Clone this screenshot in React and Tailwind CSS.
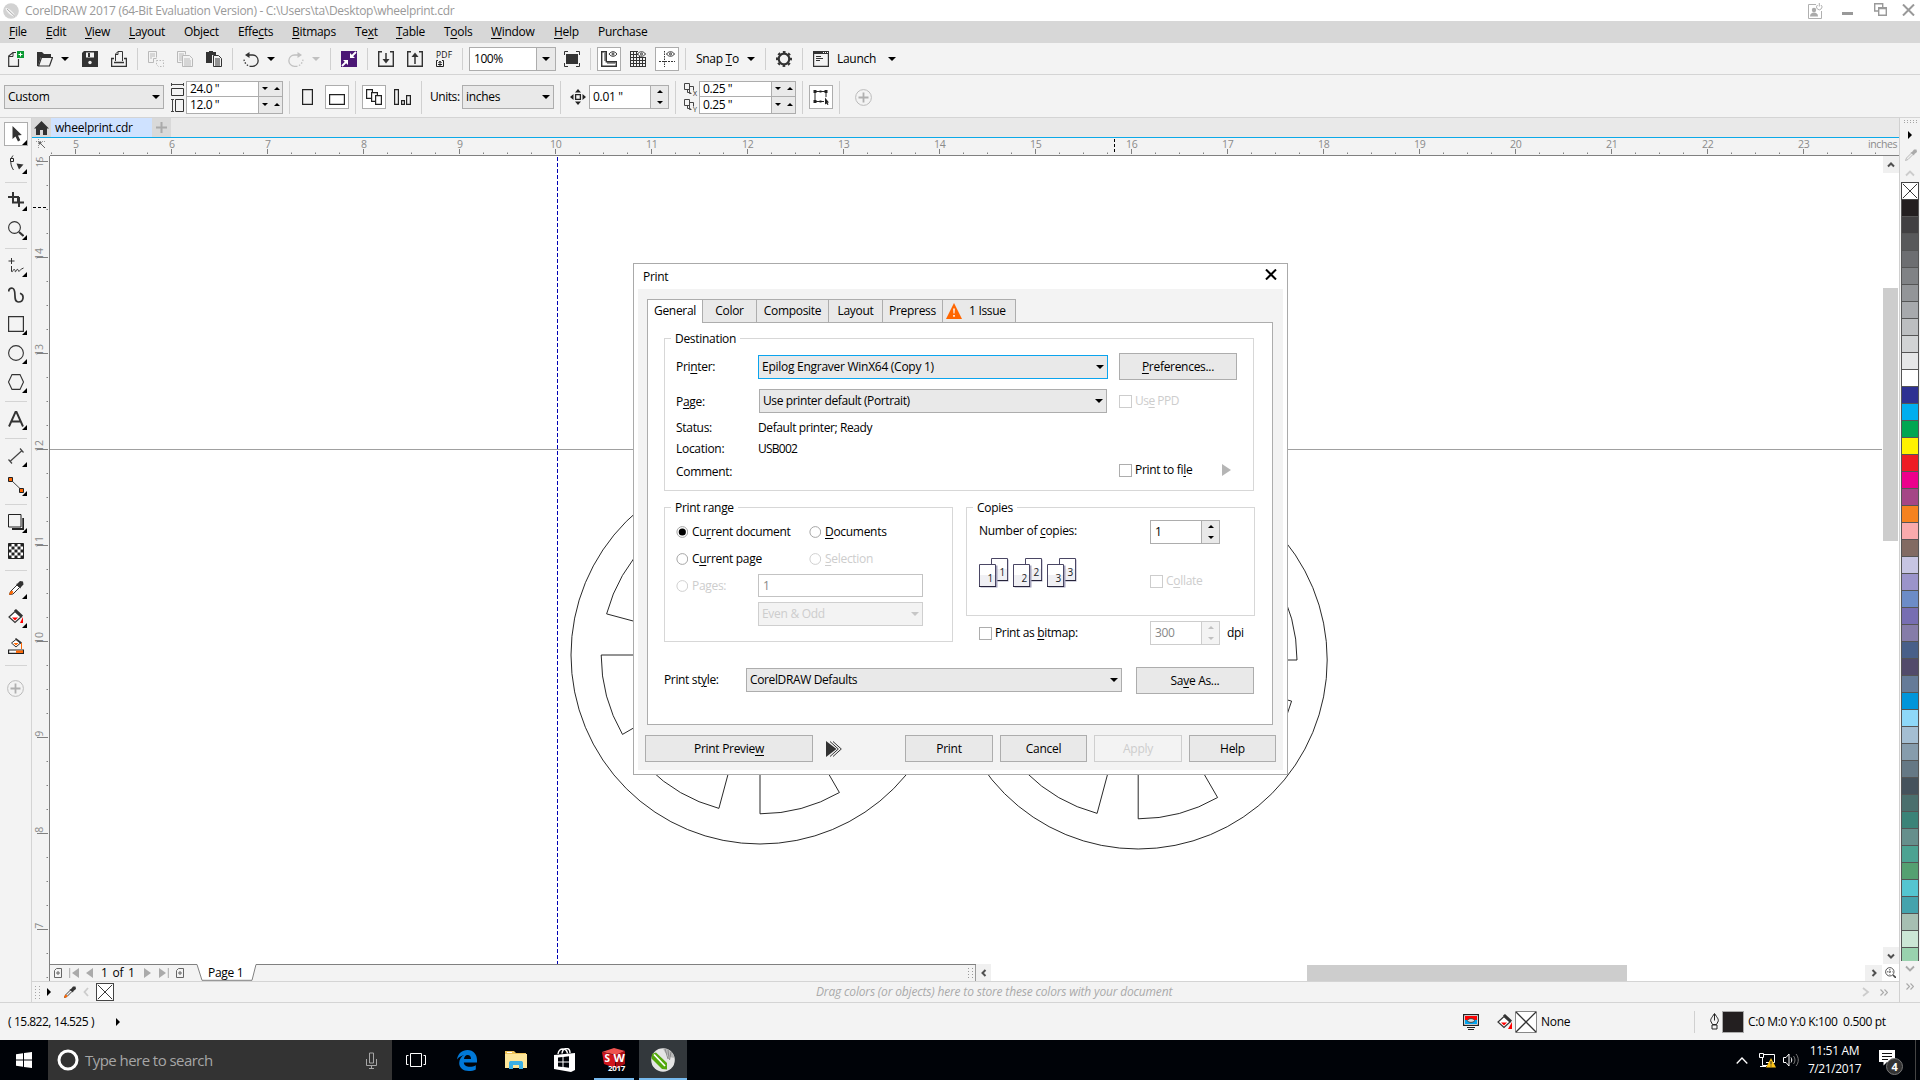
import React from "react";

/* ---------- text helpers ---------- */

// "_" marks the letter that follows it as the keyboard accelerator.
function Acc({ t }) {
  const i = t.indexOf("_");
  if (i < 0) return <>{t}</>;
  return (
    <>
      {t.slice(0, i)}
      <span className="underline underline-offset-[2px] decoration-1">{t[i + 1]}</span>
      {t.slice(i + 2)}
    </>
  );
}

/* ---------- small shared pieces ---------- */

const Svg = ({ w = 16, h = 16, className = "", children }) => (
  <svg width={w} height={h} viewBox={`0 0 ${w} ${h}`} fill="none" className={`shrink-0 ${className}`}>
    {children}
  </svg>
);

const Sep = ({ className = "" }) => <div className={`w-px shrink-0 bg-[#d0d0d0] ${className}`} />;

const Down = ({ className = "", color = "#000" }) => (
  <Svg w={8} h={4} className={className}>
    <path d="M0 0h8L4 4z" fill={color} />
  </Svg>
);

const Tri = ({ up = false, color = "#000" }) => (
  <Svg w={6} h={3}>
    <path d={up ? "M0 3h6L3 0z" : "M0 0h6L3 3z"} fill={color} />
  </Svg>
);

const Toggle = ({ className = "", children }) => (
  <div className={`flex h-6 w-6 shrink-0 items-center justify-center border border-[#adadad] bg-white ${className}`}>
    {children}
  </div>
);

/* ---------- title + menu ---------- */

function TitleBar() {
  return (
    <div className="flex h-[21px] shrink-0 items-center bg-white pl-[3px] text-[#999]">
      <Svg>
        <circle cx="8" cy="8" r="7.8" fill="#d2d2d2" />
        <path d="M2.5 5C6 5 11 9 12.5 14 8 13 3 9 2.500 5z" fill="#f5f5f5" />
        <path d="M4 6l8 7.500" stroke="#aaa" />
      </Svg>
      <span className="ml-[6px] whitespace-pre text-[12px] tracking-[-0.3px]">
        CorelDRAW 2017 (64-Bit Evaluation Version) - C:\Users\ta\Desktop\wheelprint.cdr
      </span>
      <div className="ml-auto flex items-center">
        <Svg>
          <path d="M9 1.500H1.500v14h13V8" stroke="#b0b0b0" />
          <circle cx="7" cy="7" r="2.200" fill="#aaa" />
          <path d="M3 13.500c0-3 2-4 4-4s4 1 4 4z" fill="#aaa" />
          <path d="M10.500 2a2.700 2.700 0 1 0 3.500 0M12.300 0v3.500" stroke="#b0b0b0" />
        </Svg>
        <div className="ml-[19px] mt-[6px] h-[3px] w-[11px] bg-[#999]" />
        <Svg w={13} h={13} className="ml-[21px] mb-[2px]">
          <path d="M4 8H.7V.7h8V4" stroke="#999" strokeWidth="1.400" />
          <path d="M4.700 4.700h7.600v7.600H4.700zM4.700 5.500h7.600" stroke="#999" strokeWidth="1.400" />
        </Svg>
        <Svg w={13} h={12} className="ml-[15px] mr-[5px] mb-[2px]">
          <path d="M1 .5l11 11M12 .5L1 11.500" stroke="#999" strokeWidth="2" />
        </Svg>
      </div>
    </div>
  );
}

const MENU = [
  ["_File", "w-[37px]"],
  ["_Edit", "w-[39px]"],
  ["_View", "w-[44px]"],
  ["_Layout", "w-[55px]"],
  ["Ob_ject", "w-[54px]"],
  ["Effe_cts", "w-[54px]"],
  ["_Bitmaps", "w-[63px]"],
  ["Te_xt", "w-[41px]"],
  ["_Table", "w-[48px]"],
  ["T_ools", "w-[47px]"],
  ["_Window", "w-[63px]"],
  ["_Help", "w-[44px]"],
  ["Purchase", "w-[60px]"],
];

function MenuBar() {
  return (
    <div className="flex h-[22px] shrink-0 items-center bg-[#d7d7d7] pl-[9px]">
      {MENU.map(([t, w]) => (
        <span key={t} className={w}>
          <Acc t={t} />
        </span>
      ))}
    </div>
  );
}

/* ---------- standard toolbar ---------- */

const Eye = ({ x = 8 }) => (
  <g transform={`translate(${x} 0)`}>
    <path d="M0 3C2 0 6 0 8 3 6 6 2 6 0 3z" fill="#fff" stroke="#333" />
    <circle cx="4" cy="3" r="1" stroke="#333" />
  </g>
);

function StandardBar() {
  return (
    <div className="flex h-8 shrink-0 items-center border-b border-[#d4d4d4] bg-[#f3f3f3] pl-2">
      <Svg>
        <path d="M8 1.500H5L.7 5v10.300h9.800V8" stroke="#333" strokeWidth="1.200" />
        <path d="M1 5.500h4v-4" stroke="#333" />
        <path d="M9 0h7v7H9z" fill="#0a9a33" />
        <path d="M12.500 1.500v4M10.500 3.500h4" stroke="#fff" />
      </Svg>
      <Svg className="ml-[13px]">
        <path d="M0 1h5l2 2h7v3H4L1 15H0z" fill="#333" />
        <path d="M4.500 6.500h11l-3 8.500H1.500z" stroke="#333" strokeWidth="1.200" />
      </Svg>
      <Down className="ml-2" />
      <Svg className="ml-[13px]">
        <path d="M2 0h14v16H0V2z" fill="#333" />
        <path d="M4 1.500h8v5H4z" fill="#f3f3f3" />
        <path d="M6 2h2v4H6z" fill="#333" />
        <circle cx="8" cy="11.500" r="1.700" fill="#f3f3f3" />
      </Svg>
      <Svg className="ml-[13px]">
        <path d="M4.500 10V3L7 .5h4.500V10M4.500 3.500H7v-3" stroke="#333" />
        <path d="M3 7.500H.6v8h14.800v-8H13M3 11.500h10" stroke="#333" strokeWidth="1.300" />
      </Svg>
      <Sep className="ml-[10px] h-[22px]" />
      <Svg className="ml-[10px]">
        <path d="M.5.5h8v6M.5.5v11h5l0-4h3" stroke="#b9b9b9" />
        <path d="M2 3h5M2 5h5M2 7h2" stroke="#b9b9b9" />
        <path d="M8.500 9.500h7v6h-5l-2-2z" stroke="#b9b9b9" strokeDasharray="1.500 1.500" />
      </Svg>
      <Svg className="ml-[13px]">
        <path d="M.5.5h8v3M.5.5v11h4" stroke="#b9b9b9" />
        <path d="M2 3h5M2 5h3M2 7h3M2 9h3" stroke="#b9b9b9" />
        <path d="M5.500 4.500h7l3 3v8h-10z" stroke="#b9b9b9" />
        <path d="M7 8h6M7 10h7M7 12h7M7 14h7" stroke="#b9b9b9" />
      </Svg>
      <Svg className="ml-[13px]">
        <path d="M0 1h3V0h4v1h3v3H6v8H0z" fill="#333" />
        <path d="M7.500 4.500h5l3 3v8h-8z" fill="#f3f3f3" stroke="#333" />
        <path d="M9 8h5M9 10h5M9 12h5M9 14h5" stroke="#333" />
      </Svg>
      <Sep className="ml-[10px] h-[22px]" />
      <Svg className="ml-[10px]">
        <path d="M6 4h3.500a5.600 5.600 0 0 1 0 11.300H8" stroke="#333" strokeWidth="1.300" />
        <path d="M8 15.300C4.500 15 1.500 12.500 1 8.500" stroke="#333" strokeWidth="1.300" strokeDasharray="1.500 1.500" />
        <path d="M6.500 1v6L2 4z" fill="#333" />
      </Svg>
      <Down className="ml-2" />
      <Svg className="ml-[13px]">
        <path d="M10 4H6.500a5.600 5.600 0 0 0 0 11.300H8" stroke="#c0c0c0" strokeWidth="1.300" />
        <path d="M8 15.300c3.500-.3 6.500-2.800 7-6.800" stroke="#c0c0c0" strokeWidth="1.300" strokeDasharray="1.500 1.500" />
        <path d="M9.500 1v6L14 4z" fill="#c0c0c0" />
      </Svg>
      <Down className="ml-2" color="#c0c0c0" />
      <Sep className="ml-[10px] h-[22px]" />
      <Svg className="ml-[10px]">
        <path d="M0 0h16v16H0z" fill="#4b1775" />
        <path d="M15 1l-5 5M1 15l5-5" stroke="#fff" strokeWidth="1.800" />
        <path d="M9 2v5h5zM7 14V9H2z" fill="#fff" />
      </Svg>
      <Sep className="ml-[10px] h-[22px]" />
      <Svg className="ml-[10px]">
        <path d="M4 .7H.7v14.600h14.600V.7H12" stroke="#333" strokeWidth="1.400" />
        <path d="M8 2v8" stroke="#333" strokeWidth="1.500" />
        <path d="M4.500 8h7L8 12.500z" fill="#333" />
      </Svg>
      <Svg className="ml-[13px]">
        <path d="M4 .7H.7v14.600h14.600V.7H12" stroke="#333" strokeWidth="1.400" />
        <path d="M8 5v8" stroke="#333" strokeWidth="1.500" />
        <path d="M4.500 6h7L8 1.500z" fill="#333" />
      </Svg>
      <div className="ml-[13px] flex h-[16px] w-4 flex-col items-start">
        <span className="h-[8px] text-[8.5px] font-medium leading-[8px] tracking-[0.2px] text-[#111]">PDF</span>
        <Svg w={8} h={8}>
          <path d="M2 1.500H.5v6h7v-6H6M4 2v5M2.500 4L4 2.200 5.500 4M2 5.500h4" stroke="#222" />
        </Svg>
      </div>
      <Sep className="ml-[10px] h-[22px]" />
      <div className="ml-[6px] flex h-6 w-[87px] border border-[#adadad] bg-white">
        <span className="flex flex-1 items-center pl-[4px] tracking-[-0.45px]">100%</span>
        <div className="flex w-[19px] items-center justify-center border-l border-[#adadad] bg-[#e9e9e9]">
          <Down />
        </div>
      </div>
      <Svg className="ml-2">
        <path d="M.5 4V.5H4M12 .5h3.500V4M15.500 12v3.500H12M4 15.500H.5V12" stroke="#333" />
        <path d="M2 3h12v10H2z" fill="#333" />
      </Svg>
      <Sep className="ml-[10px] h-[22px]" />
      <Toggle className="ml-[6px]">
        <Svg>
          <path d="M.7.700h4.600v10h10v4.600H.7z" stroke="#333" strokeWidth="1.400" />
          <path d="M3 3h2M3 5h2M3 7h2M3 9h2M7 13v-2M9 13v-2M11 13v-2M13 13v-2" stroke="#333" />
          <Eye x={8} />
        </Svg>
      </Toggle>
      <Svg className="ml-[9px]">
        <path d="M.5 0v16M3.500 0v16M6.500 0v16M9.500 5v11M12.500 6v10M15.500 6v10M0 .5h8M0 3.500h8M0 6.500h16M0 9.500h16M0 12.500h16M0 15.500h16" stroke="#333" />
        <Eye x={7.500} />
      </Svg>
      <Toggle className="ml-[9px]">
        <Svg>
          <path d="M5.500 0v16" stroke="#333" strokeDasharray="1.500 1" />
          <path d="M0 10.500h16" stroke="#333" strokeDasharray="2 1" />
          <Eye x={7.500} />
        </Svg>
      </Toggle>
      <Sep className="ml-[6px] h-[22px]" />
      <span className="ml-[10px] w-[51px]">
        <Acc t="Snap _To" />
      </span>
      <Down />
      <Sep className="ml-[10px] h-[22px]" />
      <Svg className="ml-[10px]">
        <circle cx="8" cy="8" r="5.300" stroke="#333" strokeWidth="2.200" />
        <circle cx="8" cy="8" r="7" stroke="#333" strokeWidth="2" strokeDasharray="2.700 2.798" strokeDashoffset="1.350" />
      </Svg>
      <Sep className="ml-[10px] h-[22px]" />
      <Svg className="ml-[10px]">
        <path d="M.6.600h14.800v14.800H.6z" stroke="#333" strokeWidth="1.200" />
        <path d="M0 0h16v3H0z" fill="#333" />
        <path d="M10 1.500h1M12 1.500h1M14 1.500h1" stroke="#fff" />
        <path d="M3 5.500h5M3 7.500h7M3 9.500h4" stroke="#333" />
      </Svg>
      <span className="ml-2 w-[51px]">Launch</span>
      <Down />
    </div>
  );
}

/* ---------- property bar ---------- */

function PairField({ a, b }) {
  const Cell = ({ v, top }) => (
    <div className={`flex h-[16px] ${top ? "border-b border-[#adadad]" : ""}`}>
      <span className="flex flex-1 items-center bg-white pl-[3px] leading-[14px] tracking-[-0.4px]">{v}</span>
      <div className="flex w-6 items-center justify-between border-l border-[#adadad] bg-[#e9e9e9] pl-[3px] pr-[2px]">
        <Tri />
        <Tri up />
      </div>
    </div>
  );
  return (
    <div className="flex h-[33px] w-[97px] flex-col border border-[#adadad]">
      <Cell v={a} top />
      <Cell v={b} />
    </div>
  );
}

function PropertyBar() {
  return (
    <div className="flex h-[43px] shrink-0 items-center border-b border-[#d4d4d4] bg-[#f3f3f3] pl-1 pt-[2px]">
      <div className="flex h-6 w-[160px] items-center justify-between border border-[#adadad] bg-[#e9e9e9] pl-[3px] pr-[3px]">
        <span>Custom</span>
        <Down />
      </div>
      <div className="ml-[7px] flex flex-col gap-[3px]">
        <Svg w={13} h={13}>
          <path d="M0 1.500h13M.5 0v3M12.500 0v3" stroke="#444" />
          <path d="M.5 5.500h12v7H.5z" stroke="#333" />
        </Svg>
        <Svg w={13} h={13}>
          <path d="M1.500 0v13M0 .5h3M0 12.500h3" stroke="#444" />
          <path d="M4.500.5h8v12h-8z" stroke="#333" />
        </Svg>
      </div>
      <div className="ml-[2px]">
        <PairField a={'24.0 "'} b={'12.0 "'} />
      </div>
      <Sep className="ml-[6px] h-[33px]" />
      <Svg w={11} h={16} className="ml-[12px]">
        <path d="M.6.600h9.800v14.800H.6z" stroke="#222" strokeWidth="1.200" />
      </Svg>
      <Toggle className="ml-[12px]">
        <Svg w={16} h={11} className="mt-1">
          <path d="M.6.600h14.800v9.800H.6z" stroke="#222" strokeWidth="1.200" />
        </Svg>
      </Toggle>
      <Sep className="ml-[6px] h-[33px]" />
      <Toggle className="ml-[6px]">
        <Svg>
          <path d="M.6.600h5.800v8.800H.6z" fill="#fff" stroke="#222" strokeWidth="1.200" />
          <path d="M5.600 3.600h5.800v8.800H5.600z" fill="#fff" stroke="#222" strokeWidth="1.200" />
          <path d="M9.600 6.600h5.800v8.800H9.600z" fill="#fff" stroke="#222" strokeWidth="1.200" />
        </Svg>
      </Toggle>
      <Svg w={17} h={16} className="ml-2">
        <path d="M.6.600h3.800v14.800H.6zM7.600 11.600h2.800v3.800H7.600zM12.600 6.600h3.800v8.800h-3.800z" stroke="#222" strokeWidth="1.200" />
      </Svg>
      <Sep className="ml-[10px] h-[33px]" />
      <span className="ml-[8px] w-[32px] tracking-[-0.45px]">Units:</span>
      <div className="flex h-6 w-[92px] items-center justify-between border border-[#adadad] bg-[#e9e9e9] pl-[3px] pr-[3px]">
        <span>inches</span>
        <Down />
      </div>
      <Sep className="ml-[6px] h-[33px]" />
      <Svg className="ml-[9px]">
        <path d="M5.600 5.600h4.800v4.800H5.600z" stroke="#222" strokeWidth="1.300" />
        <path d="M8 0l3 3.500H5zM8 16l3-3.500H5zM0 8l3.500-3v6zM16 8l-3.500-3v6z" fill="#222" />
      </Svg>
      <div className="ml-[3px] flex h-6 w-[80px] border border-[#adadad] bg-white">
        <span className="flex flex-1 items-center pl-[3px]">{'0.01 "'}</span>
        <div className="flex w-[18px] flex-col items-center justify-between border-l border-[#adadad] bg-[#e9e9e9] py-[4px]">
          <Tri up />
          <Tri />
        </div>
      </div>
      <Sep className="ml-[6px] h-[33px]" />
      <div className="ml-[8px] flex flex-col gap-[3px]">
        {["X", "Y"].map((c) => (
          <div key={c} className="relative h-[13px] w-[13px]">
            <Svg w={13} h={13}>
              <path d="M.5.5h5v6h-5zM5.500 3.500h4v4M3.500 7v2.500h3M5.500 6v4.500h2" stroke="#444" />
            </Svg>
            <span className="absolute right-0 -bottom-px text-[7px] leading-[7px] tracking-normal text-[#222]">{c}</span>
          </div>
        ))}
      </div>
      <div className="ml-[2px]">
        <PairField a={'0.25 "'} b={'0.25 "'} />
      </div>
      <Sep className="ml-[6px] h-[33px]" />
      <Toggle className="ml-[6px]">
        <Svg>
          <path d="M2 2.500h11v10H2z" stroke="#222" />
          <path d="M.5 1h3v3h-3zM6.500 1.500h2v2h-2zM11.500 1h3v3h-3zM.5 11h3v3h-3zM6.500 11.500h2v2h-2z" fill="#222" />
          <path d="M11 8h5v8h-5z" fill="#fff" />
          <path d="M12 8.500v7l1.500-1L14.500 16l1-.5-1-2H16z" fill="#222" />
        </Svg>
      </Toggle>
      <Sep className="ml-[6px] h-[33px]" />
      <PlusCircle className="ml-[15px]" />
    </div>
  );
}

const PlusCircle = ({ className = "" }) => (
  <Svg w={17} h={17} className={className}>
    <circle cx="8.500" cy="8.500" r="7.900" stroke="#bbb" />
    <path d="M8.500 3.500v10M3.500 8.500h10" stroke="#b0b0b0" strokeWidth="1.800" />
  </Svg>
);

/* ---------- toolbox ---------- */

const Bucket = () => (
  <>
    <path d="M7 2.500L13 8l-6 5.500L1 8z" fill="#fff" stroke="#333" strokeWidth="1.200" />
    <path d="M6 1.500L8 0l7 6.500-1.500 2z" fill="#333" />
    <path d="M4 8.500h6L7 11.500z" fill="#f00" />
  </>
);

const TOOLS = [
  { flyout: true, on: true, d: <path d="M4.500 0v13l3-2.600L10 15.500l2.300-1.200L10 9.400l3.800-.4z" fill="#333" /> },
  {
    flyout: true,
    d: (
      <>
        <path d="M5 .5C2 4 2 10 5.500 15" stroke="#333" />
        <path d="M2.500 3.500h3v3h-3z" fill="#f3f3f3" stroke="#222" />
        <path d="M8.500 8.500l7 1-4.500 5z" fill="#333" />
      </>
    ),
  },
  "sep",
  { flyout: true, d: <path d="M0 5h10v6M5 0v10.500h11M11 5v10" stroke="#333" strokeWidth="2" /> },
  {
    flyout: true,
    d: (
      <>
        <circle cx="6.500" cy="6.500" r="5.900" stroke="#333" strokeWidth="1.100" />
        <path d="M11 11l4.500 4" stroke="#333" strokeWidth="2.200" />
      </>
    ),
  },
  "sep",
  {
    flyout: true,
    d: (
      <>
        <path d="M3.500 0v6M.5 3h6" stroke="#333" />
        <path d="M3.500 8v5.500M3.500 13.500c1.500 1.500 1.500-3 3-2s0 3 1.300 2 .8-3 2-2 .2 2.500 1.500 1.500 1-1.500 4.200-3" stroke="#333" />
      </>
    ),
  },
  {
    d: (
      <path
        d="M.8 4.500C.5 2 2.500.8 4.500 1.300 9.500 2.500 4 15 10.500 15c5.500 0 6-7.500 1.500-8.800"
        stroke="#333"
        strokeWidth="1.700"
      />
    ),
  },
  { flyout: true, d: <path d="M.6.600h14.800v14.800H.6z" stroke="#333" strokeWidth="1.200" /> },
  { flyout: true, d: <circle cx="8" cy="8" r="7.400" stroke="#333" strokeWidth="1.100" /> },
  { flyout: true, d: <path d="M4 .6h8L15.500 8 12 15.400H4L.5 8z" stroke="#333" strokeWidth="1.100" /> },
  "sep",
  { flyout: true, d: <path d="M1 15.500L7.500 1h1L15 15.500M3.500 10.500h9" stroke="#333" strokeWidth="1.900" /> },
  "sep",
  { flyout: true, d: <path d="M2.500 13L13.500 3M.5 11.500l3.500 4M12 .5l3.500 4" stroke="#444" strokeWidth="1.200" /> },
  {
    flyout: true,
    d: (
      <>
        <path d="M3 3l10.500 10" stroke="#444" />
        <path d="M.5.500h4v4h-4zM11.500 11.500h4v4h-4z" fill="#f60" stroke="#222" />
      </>
    ),
  },
  "sep",
  {
    flyout: true,
    d: (
      <>
        <path d="M.5.500h12.500v12.500H.5z" stroke="#222" />
        <path d="M4 15h11.200V4" stroke="#222" strokeWidth="1.800" />
      </>
    ),
  },
  {
    d: (
      <>
        <path d="M.5.500h15v15H.5z" fill="#fff" stroke="#222" />
        {[0, 1, 2, 3, 4].map((r) =>
          [0, 1, 2, 3, 4].map((c) =>
            (r + c) % 2 === 0 ? <rect key={`${r}${c}`} x={0.5 + c * 3} y={0.5 + r * 3} width="3" height="3" fill="#222" /> : null
          )
        )}
      </>
    ),
  },
  "sep",
  {
    flyout: true,
    d: (
      <>
        <path d="M1.500 14.500l1-3L9 5l2.500 2.500-6.500 6.500z" fill="#fff" stroke="#333" />
        <path d="M1 15l1-3 2-1.500 1.500 1.500-1.500 2z" fill="#f60" />
        <path d="M8 4l1.500-.500L12 1l3 .500.500 3L13 7l-.5 1.500z" fill="#333" />
      </>
    ),
  },
  {
    flyout: true,
    d: (
      <>
        <Bucket />
        <path d="M15 8v6h-3z" fill="#f00" />
      </>
    ),
  },
  {
    d: (
      <>
        <path d="M8 1.500l4.500 3.500L8 9 3.500 5z" fill="#fff" stroke="#333" />
        <path d="M7 1l1-1 6 4.500-1.500 1.500z" fill="#333" />
        <path d="M5.500 5h5L8 7.500zM13 5h1v6h-1z" fill="#f60" />
        <path d="M.6 12h14.800v3.400H.6z" fill="#fff" stroke="#222" strokeWidth="1.200" />
        <path d="M8 12.500h7v2.400H8z" fill="#f60" />
      </>
    ),
  },
  "sep",
];

function Toolbox() {
  return (
    <div className="flex w-8 shrink-0 flex-col border-r border-[#d4d4d4] bg-[#f3f3f3] pt-[2px]">
      {TOOLS.map((t, i) =>
        t === "sep" ? (
          <div key={i} className="flex h-2 shrink-0 items-center pl-[5px]">
            <div className="h-px w-[22px] bg-[#d4d4d4]" />
          </div>
        ) : (
          <div key={i} className="relative h-[29px] shrink-0 pl-1 pt-[2px]">
            <div className={`flex h-6 w-6 items-center justify-center ${t.on ? "border border-[#adadad] bg-white" : ""}`}>
              <Svg>{t.d}</Svg>
            </div>
            {t.flyout && (
              <Svg w={5} h={5} className="absolute right-[4px] bottom-[4px]">
                <path d="M5 0v5H0z" fill="#000" />
              </Svg>
            )}
          </div>
        )
      )}
      <PlusCircle className="ml-[7px] mt-[11px]" />
    </div>
  );
}

/* ---------- rulers ---------- */

const range = (n) => Array.from({ length: n }, (_, i) => i);

function TopRuler() {
  return (
    <svg width="1867" height="18" viewBox="32 138 1867 18" className="block shrink-0 bg-[#f3f3f3]">
      <path d="M50 155.500H1899" stroke="#808080" />
      {range(77).map((i) => {
        const x = 51.5 + i * 24;
        if (x > 1890) return null;
        const major = (i - 1) % 4 === 0;
        return <path key={i} d={major ? `M${x} 149v5` : `M${x} 152.500v1.500`} stroke="#808080" />;
      })}
      {range(19).map((i) => (
        <text key={i} x={75.8 + i * 96} y="148.200" fontSize="10.500" fill="#8a8a8a" textAnchor="middle">
          {i + 5}
        </text>
      ))}
      <text x="1868" y="148.200" fontSize="10.500" letterSpacing="-0.400" fill="#8a8a8a">
        inches
      </text>
      <path d="M1114.500 139v15" stroke="#000" strokeDasharray="3 2" />
      <path d="M36 141.500h10M38.500 139v9" stroke="#999" strokeDasharray="1 1" />
      <path d="M39 142l6 6" stroke="#666" />
      <path d="M38 141l4 1.500-2.500 2.500z" fill="#666" />
    </svg>
  );
}

function LeftRuler() {
  return (
    <svg width="18" height="825" viewBox="32 156 18 825" className="block shrink-0 bg-[#f3f3f3]">
      <path d="M49.500 155V981" stroke="#808080" />
      {range(35).map((i) => {
        const y = 161.500 + i * 24;
        if (y > 980) return null;
        return <path key={i} d={i % 4 === 0 ? `M37 ${y}h11` : `M46.500 ${y}h1.500`} stroke="#808080" />;
      })}
      {range(9).map((i) => (
        <text
          key={i}
          transform={`translate(43 ${(i === 0 ? 162 : 158) + i * 96}) rotate(-90)`}
          fontSize={i === 0 ? "9.500" : "10.500"}
          fill="#8a8a8a"
          textAnchor="middle"
        >
          {15 - i}
        </text>
      ))}
      <path d="M33 207.500h15" stroke="#000" strokeDasharray="3 2" />
    </svg>
  );
}

/* ---------- drawing ---------- */

const pt = (cx, cy, r, deg) => {
  const a = (deg * Math.PI) / 180;
  return `${(cx + r * Math.cos(a)).toFixed(2)} ${(cy + r * Math.sin(a)).toFixed(2)}`;
};

function Wheel({ cx, cy }) {
  return (
    <g stroke="#111" fill="none" strokeWidth="0.9">
      <circle cx={cx} cy={cy} r="189" />
      {range(8).map((i) => {
        const a = 15 + i * 45;
        return (
          <path
            key={i}
            d={`M${pt(cx, cy, 60, a)}L${pt(cx, cy, 158.800, a)}A158.800 158.800 0 0 1 ${pt(cx, cy, 158.800, a + 30)}L${pt(cx, cy, 60, a + 30)}A60 60 0 0 0 ${pt(cx, cy, 60, a)}`}
          />
        );
      })}
    </g>
  );
}

function Canvas() {
  return (
    <svg width="1833" height="808" viewBox="50 156 1833 808" className="block shrink-0 bg-white">
      <path d="M50 449.500H1882" stroke="#a0a0a0" />
      <Wheel cx={760} cy={655} />
      <Wheel cx={1138.200} cy={660} />
      <path d="M557.500 157V964" stroke="#0000b4" strokeDasharray="4 2" />
    </svg>
  );
}

const ChevBox = ({ d, className = "" }) => (
  <div className={`flex shrink-0 items-center justify-center bg-[#f0f0f0] ${className}`}>
    <Svg w={8} h={8}>
      <path d={d} stroke="#505050" strokeWidth="2" />
    </Svg>
  </div>
);

const UP = "M1 5.500L4 2.500l3 3";
const DOWN = "M1 2.500l3 3 3-3";
const LEFT = "M5.500 1l-3 3 3 3";
const RIGHT = "M2.500 1l3 3-3 3";

/* ---------- page navigator + horizontal scroll ---------- */

const AddPage = ({ className }) => (
  <Svg w={8} h={10} className={className}>
    <path d="M2.500.5h5v9h-7v-7z" stroke="#666" />
    <path d="M4 3v4M2 5h4" stroke="#666" />
  </Svg>
);

function PageBar() {
  return (
    <div className="flex h-[17px] shrink-0 bg-[#f3f3f3]">
      <div className="flex w-[146px] shrink-0 items-center border-t border-[#808080]">
        <AddPage className="ml-1" />
        <Svg w={10} h={10} className="ml-[7px]">
          <path d="M.7 0v10" stroke="#aaa" />
          <path d="M10 0v10L3 5z" fill="#aaa" />
        </Svg>
        <Svg w={8} h={10} className="ml-[6px]">
          <path d="M8 0v10L1 5z" fill="#aaa" />
        </Svg>
        <span className="ml-[8px] w-[36px] whitespace-pre leading-[14px] tracking-[-0.1px] [word-spacing:1.6px]">1 of 1</span>
        <Svg w={8} h={10} className="ml-[7px]">
          <path d="M0 0v10l7-5z" fill="#aaa" />
        </Svg>
        <Svg w={10} h={10} className="ml-[7px]">
          <path d="M9.300 0v10" stroke="#aaa" />
          <path d="M0 0v10l7-5z" fill="#aaa" />
        </Svg>
        <AddPage className="ml-[7px]" />
      </div>
      <div className="relative flex w-[61px] shrink-0 items-center pl-[12px]">
        <svg width="61" height="17" viewBox="0 0 61 17" className="absolute inset-0">
          <path d="M0 .5h1L6 16.500h50L60 .5h1V0H0z" fill="#fff" />
          <path d="M0 .5h1L6 16.300h50L60 .5h1" stroke="#808080" fill="none" />
        </svg>
        <span className="relative leading-[14px]">Page 1</span>
      </div>
      <div className="flex flex-1 justify-end border-t border-[#808080]">
        <div className="mr-px grid w-[6px] grid-cols-2 content-center gap-[2px] border-[#808080]">
          {range(8).map((i) => (
            <div key={i} className="h-px w-px bg-[#999]" />
          ))}
        </div>
        <div className="w-px bg-[#999]" />
      </div>
      <div className="flex w-[923px] shrink-0 bg-white">
        <ChevBox d={LEFT} className="w-[15px]" />
        <div className="ml-[316px] mt-px h-[16px] w-[320px] bg-[#cdcdcd]" />
        <ChevBox d={RIGHT} className="ml-[238px] mt-px w-[17px]" />
        <div className="ml-auto flex w-[17px] items-center justify-center bg-white">
          <Svg w={11} h={11}>
            <circle cx="4.800" cy="4.800" r="4.200" stroke="#555" />
            <path d="M4.800 2v5.600M2 4.800h5.600" stroke="#555" strokeDasharray="1.500 1" />
            <path d="M8 8l3 3" stroke="#444" strokeWidth="1.600" />
          </Svg>
        </div>
      </div>
    </div>
  );
}

const CrossSwatch = ({ className = "" }) => (
  <svg viewBox="0 0 18 18" preserveAspectRatio="none" className={`block shrink-0 border border-[#444] bg-white ${className}`}>
    <path d="M1 1l16 16M17 1L1 17" stroke="#333" strokeWidth="1.100" />
  </svg>
);

const Dropper = ({ gray = false }) => (
  <Svg w={13} h={13}>
    <path d="M1.500 11.500l1-2.500 5-5 1.500 1.500-5 5z" fill="#eee" stroke={gray ? "#bbb" : "#444"} />
    {!gray && <path d="M1 12l1-3 1-.5 1.500 1.500-.5 1z" fill="#f60" />}
    <path d="M6.500 3.500L8 3l2-2.500 2.500 0 .5 2.500L10.500 5 10 6.500z" fill={gray ? "#aaa" : "#333"} />
  </Svg>
);

function DocPalette() {
  return (
    <div className="flex h-[20px] shrink-0 items-center bg-[#f3f3f3]">
      <div className="ml-[3px] grid w-[5px] grid-cols-2 gap-x-[2px] gap-y-[2px]">
        {range(10).map((i) => (
          <div key={i} className="h-px w-px bg-[#a5a5a5]" />
        ))}
      </div>
      <Svg w={4} h={8} className="ml-[7px]">
        <path d="M0 0v8l4-4z" fill="#000" />
      </Svg>
      <div className="ml-[12px]">
        <Dropper />
      </div>
      <Svg w={6} h={10} className="ml-[7px]">
        <path d="M5 1L1.500 5 5 9" stroke="#ccc" strokeWidth="1.800" />
      </Svg>
      <CrossSwatch className="ml-[7px] h-[18px] w-[18px]" />
      <span className="ml-[702px] w-[360px] whitespace-nowrap italic tracking-[-0.17px] text-[#aaa]">
        Drag colors (or objects) here to store these colors with your document
      </span>
      <Svg w={8} h={10} className="ml-auto">
        <path d="M1 1l5 4-5 4" stroke="#ccc" strokeWidth="1.800" />
      </Svg>
      <Svg w={8} h={7} className="ml-[10px] mr-[11px]">
        <path d="M.5.5l3 3-3 3M4.500.5l3 3-3 3" stroke="#aaa" strokeWidth="1.200" />
      </Svg>
    </div>
  );
}

/* ---------- color palette ---------- */

const COLORS = [
  "bg-[#231f20]", "bg-[#414042]", "bg-[#58595b]", "bg-[#6d6e71]", "bg-[#808285]", "bg-[#939598]", "bg-[#a7a9ac]",
  "bg-[#bcbec0]", "bg-[#d1d3d4]", "bg-[#e6e7e8]", "bg-[#ffffff]", "bg-[#2e3192]", "bg-[#00aeef]", "bg-[#00a651]",
  "bg-[#fff200]", "bg-[#ed1c24]", "bg-[#ec008c]", "bg-[#a54686]", "bg-[#f58220]", "bg-[#f8aaac]", "bg-[#826b63]",
  "bg-[#c7c5e2]", "bg-[#9b94ca]", "bg-[#6c8cc7]", "bg-[#776eb2]", "bg-[#857ca9]", "bg-[#496089]", "bg-[#524b6b]",
  "bg-[#657b98]", "bg-[#0095da]", "bg-[#8ed8f8]", "bg-[#a4bed2]", "bg-[#869cac]", "bg-[#657885]", "bg-[#45525c]",
  "bg-[#4b6f6d]", "bg-[#3b8378]", "bg-[#668f8c]", "bg-[#4ca392]", "bg-[#54a071]", "bg-[#54c5d0]", "bg-[#44a3ad]",
  "bg-[#a6bfb2]", "bg-[#cbe6d5]", "bg-[#99d2ae]",
];

function Palette() {
  return (
    <div className="flex w-[21px] shrink-0 flex-col items-center border-l border-[#d0d0d0] bg-[#f3f3f3] pt-[2px]">
      <div className="grid grid-cols-5 gap-x-[2px] gap-y-px">
        {range(10).map((i) => (
          <div key={i} className="h-px w-px bg-[#a5a5a5]" />
        ))}
      </div>
      <Svg w={4} h={8} className="mt-[8px]">
        <path d="M0 0v8l4-4z" fill="#000" />
      </Svg>
      <div className="mt-[10px]">
        <Dropper gray />
      </div>
      <Svg w={10} h={8} className="mt-[7px]">
        <path d="M1 6.500l4-4 4 4" stroke="#ccc" strokeWidth="1.800" />
      </Svg>
      <div className="mt-[5px] flex h-[779px] w-[18px] flex-col overflow-hidden">
        <CrossSwatch className="h-[18px] w-[18px]" />
        {COLORS.map((c) => (
          <div key={c} className={`h-[17px] w-[18px] shrink-0 border-x border-b border-[#555] ${c}`} />
        ))}
      </div>
      <Svg w={10} h={8} className="mt-[4px]">
        <path d="M1 1.500l4 4 4-4" stroke="#aaa" strokeWidth="1.800" />
      </Svg>
      <Svg w={8} h={7} className="mt-[10px]">
        <path d="M.5.5l3 3-3 3M4.500.5l3 3-3 3" stroke="#aaa" strokeWidth="1.200" />
      </Svg>
    </div>
  );
}

/* ---------- print dialog ---------- */

const Btn = ({ t, className = "", off = false }) => (
  <div
    className={`flex h-[27px] shrink-0 items-center justify-center border ${
      off ? "border-[#cfcfcf] bg-[#f3f3f3] text-[#cdcdcd]" : "border-[#adadad] bg-[#e9e9e9]"
    } ${className}`}
  >
    <span>
      <Acc t={t} />
    </span>
  </div>
);

const Combo = ({ t, className = "border-[#adadad] bg-[#e9e9e9]", off = false }) => (
  <div className={`flex h-6 shrink-0 items-center justify-between border pl-[3px] pr-[3px] ${className}`}>
    <span>{t}</span>
    <Down color={off ? "#c6c6c6" : "#000"} />
  </div>
);

const Check = ({ t, off = false, className = "" }) => (
  <div className={`flex items-center ${off ? "text-[#cdcdcd]" : ""} ${className}`}>
    <div className={`h-[13px] w-[13px] border bg-white ${off ? "border-[#cdcdcd]" : "border-[#adadad]"}`} />
    <span className="ml-[3px]">
      <Acc t={t} />
    </span>
  </div>
);

const Radio = ({ t, on = false, off = false, className = "" }) => (
  <div className={`flex h-4 items-center ${off ? "text-[#cdcdcd]" : ""} ${className}`}>
    <Svg w={12} h={12}>
      <circle cx="6.300" cy="6" r="5.400" fill="#fff" stroke={off ? "#d0d0d0" : "#a6a6a6"} />
      {on && <circle cx="6.300" cy="6" r="3.600" fill="#000" />}
    </Svg>
    <span className="ml-1">
      <Acc t={t} />
    </span>
  </div>
);

const Spin = ({ v, off = false }) => (
  <div className={`flex h-6 w-[70px] shrink-0 border bg-white ${off ? "border-[#cdcdcd] text-[#888]" : "border-[#adadad]"}`}>
    <span className="flex flex-1 items-center pl-1">{v}</span>
    <div
      className={`flex w-[18px] flex-col items-center justify-between border-l py-[4px] ${
        off ? "border-[#cdcdcd] bg-[#f3f3f3]" : "border-[#adadad] bg-[#e9e9e9]"
      }`}
    >
      <Tri up color={off ? "#c0c0c0" : "#000"} />
      <Tri color={off ? "#c0c0c0" : "#000"} />
    </div>
  </div>
);

const Group = ({ legend, className, children }) => (
  <div className={`relative border border-[#d7d7d7] ${className}`}>
    <span className="absolute left-[6px] -top-[8px] bg-white px-1 leading-[16px]">{legend}</span>
    {children}
  </div>
);

const Sheets = ({ n }) => (
  <svg width="31" height="31" viewBox="0 0 31 31" className="block shrink-0">
    <path d="M13.500 1.500h16v22h-16z" fill="#a5a4bd" />
    <path d="M12.500.5h16v22h-16z" fill="#fff" stroke="#4a4664" />
    <path d="M13 11h15v11H13z" fill="#f0f0f4" />
    <path d="M12 22.500h17" stroke="#26233a" />
    <path d="M1.500 7.500h17v22h-17z" fill="#a5a4bd" />
    <path d="M.5 6.500h16v22H.5z" fill="#fff" stroke="#4a4664" />
    <path d="M1 17h15v11H1z" fill="#f0f0f4" />
    <path d="M0 28.500h17" stroke="#26233a" />
    <text x="11.300" y="24" fontSize="10" fill="#222" textAnchor="middle">{n}</text>
    <text x="23.300" y="18.200" fontSize="10" fill="#222" textAnchor="middle">{n}</text>
  </svg>
);

const TABS = [
  ["General", "w-[55px]"],
  ["Color", "w-[54px]"],
  ["Composite", "w-[72px]"],
  ["Layout", "w-[54px]"],
  ["Prepress", "w-[60px]"],
];

function PrintDialog() {
  return (
    <div className="absolute left-[633px] top-[263px] flex h-[512px] w-[655px] flex-col border border-[#aaa] bg-white px-[4px] pb-[4px]">
      <div className="flex h-[25px] shrink-0 items-center justify-between pl-[5px] pr-[6px]">
        <span className="mt-px">Print</span>
        <Svg w={12} h={11} className="mb-[4px]">
          <path d="M1 .5l10 10M11 .5L1 10.500" stroke="#000" strokeWidth="2" />
        </Svg>
      </div>
      <div className="flex flex-1 flex-col bg-[#f3f3f3] pt-[10px]">
        <div className="relative z-10 ml-[9px] flex h-[24px] shrink-0">
          {TABS.map(([t, w], i) => (
            <div
              key={t}
              className={`flex items-center justify-center border-l border-t border-[#adadad] ${w} ${
                i === 0 ? "h-[24px] bg-white pb-px" : "h-[23px] bg-[#e9e9e9]"
              }`}
            >
              {t}
            </div>
          ))}
          <div className="flex h-[23px] w-[74px] items-center border-x border-t border-[#adadad] bg-[#e9e9e9] pl-[3px]">
            <Svg w={16} h={16}>
              <path d="M8 0l8 16H0z" fill="#f60" />
              <path d="M7.200 5.500h1.600l-.3 5h-1zM7.200 12h1.600v1.700H7.200z" fill="#fff" />
            </Svg>
            <span className="ml-[7px]">1 Issue</span>
          </div>
        </div>

        <div className="-mt-px ml-[9px] h-[403px] w-[626px] shrink-0 border border-[#adadad] bg-white pl-4 pt-[15px]">
          <Group legend="Destination" className="flex h-[153px] w-[590px] pl-[11px]">
            <div className="w-[82px] pt-[19px] leading-[18px]">
              <div><Acc t="Pri_nter:" /></div>
              <div className="mt-[17px]"><Acc t="P_age:" /></div>
              <div className="mt-[8px]">Status:</div>
              <div className="mt-[3px]">Location:</div>
              <div className="mt-[5px]">Comment:</div>
            </div>
            <div className="w-[361px] pt-[16px] leading-[18px]">
              <Combo t="Epilog Engraver WinX64 (Copy 1)" className="w-[350px] border-[#0ba4ee] bg-[#e9e9e9] tracking-[-0.27px]" />
              <Combo t="Use printer default (Portrait)" className="ml-px mt-[10px] w-[348px] border-[#adadad] bg-[#e9e9e9] tracking-[-0.38px]" />
              <div className="mt-[6px] tracking-[-0.4px]">Default printer; Ready</div>
              <div className="mt-[3px] tracking-[-0.75px]">USB002</div>
            </div>
            <div className="pt-[14px] leading-[18px]">
              <Btn t="_Preferences..." className="w-[118px]" />
              <Check t="Us_e PPD" off className="mt-[12px] tracking-[-0.5px]" />
              <div className="mt-[51px] flex items-center">
                <Check t="Print to fi_le" className="w-[103px]" />
                <Svg w={9} h={12}>
                  <path d="M0 0v12l9-6z" fill="#b5b5b5" />
                </Svg>
              </div>
            </div>
          </Group>

          <div className="mt-4 flex gap-[13px]">
            <Group legend="Print range" className="h-[135px] w-[289px] pl-[11px] pt-[16px]">
              <div className="flex">
                <Radio t="Cu_rrent document" on className="w-[133px]" />
                <Radio t="_Documents" />
              </div>
              <div className="mt-[11px] flex">
                <Radio t="C_urrent page" className="w-[133px]" />
                <Radio t="_Selection" off />
              </div>
              <div className="mt-[7px] flex items-center">
                <Radio t="Pa_ges:" off className="w-[82px]" />
                <div className="flex h-[23px] w-[165px] items-center border border-[#c3c3c3] pl-1 text-[#888]">1</div>
              </div>
              <Combo t="Even & Odd" off className="ml-[82px] mt-[5px] w-[165px] border-[#cfcfcf] bg-[#f3f3f3] text-[#cdcdcd]" />
            </Group>
            <div>
              <Group legend="Copies" className="h-[109px] w-[289px] pl-[12px] pt-[12px]">
                <div className="flex items-center">
                  <span className="mb-[3px] w-[171px]"><Acc t="Number of _copies:" /></span>
                  <Spin v="1" />
                </div>
                <div className="mt-[14px] flex items-start">
                  <div className="flex w-[171px] gap-[3px]">
                    <Sheets n="1" />
                    <Sheets n="2" />
                    <Sheets n="3" />
                  </div>
                  <Check t="C_ollate" off className="mt-[15px]" />
                </div>
              </Group>
              <div className="mt-[5px] flex items-center pl-[13px]">
                <Check t="Print as _bitmap:" className="w-[171px] tracking-[-0.35px]" />
                <Spin v="300" off />
                <span className="ml-[7px]">dpi</span>
              </div>
            </div>
          </div>

          <div className="mt-[21px] flex items-center">
            <span className="w-[82px] tracking-[-0.35px]"><Acc t="Print st_yle:" /></span>
            <Combo t="CorelDRAW Defaults" className="w-[376px] border-[#adadad] bg-[#e9e9e9] tracking-[-0.37px]" />
            <Btn t="Sa_ve As..." className="ml-[14px] mt-px w-[118px]" />
          </div>
        </div>

        <div className="mt-[10px] flex items-center pl-[7px]">
          <Btn t="Print Previe_w" className="w-[168px]" />
          <Svg w={16} h={16} className="ml-[13px]">
            <path d="M0 0v16l10.500-8z" fill="#333" />
            <path d="M4 .5L12.300 8 4 15.500M7 .5L15.300 8 7 15.500" stroke="#333" />
          </Svg>
          <Btn t="Print" className="ml-[63px] w-[88px]" />
          <Btn t="Cancel" className="ml-[7px] w-[87px]" />
          <Btn t="Apply" off className="ml-[7px] w-[88px]" />
          <Btn t="Help" className="ml-[7px] w-[87px]" />
        </div>
      </div>
    </div>
  );
}

/* ---------- status bar ---------- */

function StatusBar() {
  return (
    <div className="flex h-[38px] shrink-0 items-center border-t border-[#d4d4d4] bg-[#f3f3f3] pl-[8px]">
      <span className="w-[108px] whitespace-pre tracking-[-0.55px] [word-spacing:0.5px]">( 15.822, 14.525 )</span>
      <Svg w={4} h={8}>
        <path d="M0 0v8l4-4z" fill="#000" />
      </Svg>
      <Svg className="ml-[1343px]">
        <path d="M.6.600h14.800v10.800H.6z" fill="#fff" stroke="#222" strokeWidth="1.200" />
        <path d="M2 2h12v4H2z" fill="#f00" />
        <path d="M2 6h12v4H2z" fill="#00a5f0" />
        <path d="M4 6.500C6 4 10 4 12 6.500 10 9 6 9 4 6.500z" fill="#ddd" stroke="#444" />
        <path d="M4 13.500h8M5 15.500h6" stroke="#222" />
      </Svg>
      <Svg className="ml-[18px]">
        <Bucket />
        <path d="M15 8v7h-4z" fill="#f00" />
      </Svg>
      <svg width="22" height="22" viewBox="0 0 22 22" className="ml-[2px] shrink-0 bg-white">
        <path d="M.5.5h21v21H.5z" stroke="#888" fill="none" />
        <path d="M1 1l20 20M21 1L1 21" stroke="#333" strokeWidth="1.300" />
      </svg>
      <span className="ml-1 w-[153px]">None</span>
      <Sep className="h-[22px]" />
      <Svg w={9} h={17} className="ml-[15px]">
        <path d="M4.500.5C1.500 5 .500 6 .700 8L2.500 11.500h4L8.300 8C8.500 6 7.500 5 4.500.5zM4.500 1v6.500M2 12h5v4H2z" stroke="#222" />
      </Svg>
      <div className="ml-[3px] h-[22px] w-[22px] border border-[#aaa] bg-[#231f20]" />
      <span className="ml-1 whitespace-pre tracking-[-0.35px]">C:0 M:0 Y:0 K:100  0.500 pt</span>
    </div>
  );
}

/* ---------- Windows taskbar ---------- */

function Taskbar() {
  return (
    <div className="flex h-10 shrink-0 bg-[#000308] text-white">
      <div className="flex w-12 shrink-0 items-center justify-center">
        <Svg>
          <path d="M0 2.300L7 1.300v6.300H0zM8 1.100L16 0v7.600H8zM0 8.500h7v6.300L0 13.800zM8 8.500h8V16l-8-1.100z" fill="#fff" />
        </Svg>
      </div>
      <div className="flex w-[344px] shrink-0 items-center bg-[#333] pl-[9px]">
        <Svg w={22} h={22}>
          <circle cx="11" cy="11" r="9" stroke="#fff" strokeWidth="3" />
        </Svg>
        <span className="ml-[6px] w-[281px] text-[15px] tracking-[-0.55px] text-[#a6a6a6]">Type here to search</span>
        <Svg w={11} h={17}>
          <path d="M3.500 1h4v10h-4zM.5 7v6.500h10V7M5.500 13.500v3M3 16.500h5" stroke="#a6a6a6" />
        </Svg>
      </div>
      <div className="flex w-12 shrink-0 items-center justify-center">
        <Svg w={20} h={14}>
          <path d="M4.500.5h11v13h-11zM2.500 2.500h-2v9h2M17.500 2.500h2v9h-2" stroke="#fff" />
        </Svg>
      </div>
      <div className="flex w-[54px] shrink-0 items-center justify-center">
        <Svg w={20} h={21}>
          <path d="M0 9.500C1 3.500 5 0 10.500 0 16.500 0 20 4.500 20 10v2.500H6.800c.2 3 3 4.300 6 4.300 2.300 0 4.200-.5 6-1.600v4.300c-2 1-4.200 1.500-7 1.500C6 21 2.200 17.700 2.200 13c0-3.500 2-6.700 5-8-1.500.5-5 1.500-7.200 4.500zM7 9h7c0-2.500-1.200-4-3.400-4S7.300 6.700 7 9z" fill="#0078d7" />
        </Svg>
      </div>
      <div className="flex w-[44px] shrink-0 items-center justify-center">
        <Svg w={22} h={18}>
          <path d="M0 0h9l2 2h10v3H0z" fill="#eec35a" />
          <path d="M2 1h5v1H2z" fill="#fff" />
          <path d="M0 3h22v14H0z" fill="#fde69a" />
          <path d="M4 18v-6c0-1.500 1-2 2-2h10c1 0 2 .5 2 2v6h-4v-4H8v4z" fill="#3bb0e6" />
        </Svg>
      </div>
      <div className="flex w-[53px] shrink-0 items-center justify-center">
        <Svg w={21} h={24}>
          <path d="M4 6C4.500 2.500 6.500 1 9 1s4 1.500 4.500 4.500M8 5.500c.5-4 2.500-5 4.500-5S16 2 16 5" stroke="#fff" strokeWidth="1.400" />
          <path d="M0 7l21-2v17l-4 2L0 21z" fill="#fff" />
          <path d="M4 9.500l4.500-.5v4.500H4zM9.500 8.900l5.500-.7v5.300H9.500zM4 14.500h4.500V19L4 18.500zM9.500 14.500H15v5.200l-5.500-.6z" fill="#000308" />
        </Svg>
      </div>
      <div className="relative flex w-[48px] shrink-0 items-center pl-[11px]">
        <svg width="24" height="24" viewBox="0 0 24 24" className="shrink-0">
          <path d="M0 4L12 0l11 3-8 4z" fill="#ef5350" />
          <path d="M0 4l13 3v13L2 16z" fill="#d0161c" />
          <path d="M13 7l10-4v13l-9 5z" fill="#a80c12" />
          <text x="2.500" y="14" fontSize="10" fontWeight="700" fill="#fff">S</text>
          <text x="11.500" y="14" fontSize="10" fontWeight="700" fill="#fff" textLength="11" lengthAdjust="spacingAndGlyphs">W</text>
          <text x="6" y="23.300" fontSize="7.500" fontWeight="700" fill="#fff" textLength="17" lengthAdjust="spacingAndGlyphs">2017</text>
        </svg>
        <div className="absolute bottom-0 left-[3px] h-[2px] w-[40px] bg-[#76b9ed]" />
      </div>
      <div className="relative flex w-[48px] shrink-0 items-center justify-center bg-[#33383c]">
        <Svg w={24} h={24}>
          <circle cx="12" cy="12" r="11.800" fill="#e4e4e4" />
          <path d="M12 .5c5.500 0 10 3 11.500 9-3.500 1.500-9-3-11.500-9z" fill="#b8b8b8" />
          <path d="M14 1l3 10M17 1.500l1 9.500M20 4l-1.500 8" stroke="#8a8a8a" />
          <path d="M1 6l4-1.500L16 15v6.500L11 21 .5 10.500z" fill="#54a80c" />
          <path d="M3 6.500L14 18" stroke="#fff" strokeWidth="1.700" />
        </Svg>
        <div className="absolute inset-x-0 bottom-0 h-[2px] bg-[#76b9ed]" />
      </div>
      <div className="ml-auto flex items-center">
        <Svg w={12} h={7}>
          <path d="M.7 6.500L6 1l5.300 5.500" stroke="#fff" strokeWidth="1.300" />
        </Svg>
        <Svg w={17} h={15} className="ml-[11px]">
          <path d="M5 1.500h10.500v8H7M3.500 5v7.500H10M.5.500h4v4h-4z" stroke="#fff" fill="none" />
          <path d="M1 13.500h6" stroke="#fff" />
          <path d="M12 5l5 9.500H7z" fill="#fcc419" />
          <path d="M12 8v3.500M12 12.500v1" stroke="#222" />
        </Svg>
        <Svg w={17} h={14} className="ml-[7px]">
          <path d="M.5 4.500h2.500l3-3.500v12l-3-3.500H.5z" stroke="#fff" />
          <path d="M8 4.500c1 1.500 1 3.500 0 5" stroke="#fff" />
          <path d="M10.500 3c2 2.500 2 5.500 0 8M13 1c3 3.500 3 8.500 0 12" stroke="#777" />
        </Svg>
        <div className="ml-[8px] flex w-[53px] flex-col items-center whitespace-nowrap leading-[18px]">
          <span>11:51 AM</span>
          <span className="tracking-[-0.4px]">7/21/2017</span>
        </div>
        <div className="relative ml-[18px] h-[26px] w-[24px]">
          <Svg w={16} h={16} className="mt-[3px]">
            <path d="M0 0h16v12H8l-3.500 3.500V12H0z" fill="#fff" />
            <path d="M3 3.500h10M3 6.500h10M3 9.500h6" stroke="#111" />
          </Svg>
          <div className="absolute right-0 -bottom-[2px] flex h-[17px] w-[17px] items-center justify-center rounded-full border border-[#777] bg-[#333] text-[11px] font-bold leading-none">
            4
          </div>
        </div>
        <div className="ml-[12px] mr-1 h-10 w-px bg-[#444]" />
      </div>
    </div>
  );
}

/* ---------- window ---------- */

export default function App() {
  return (
    <div className="relative flex h-[1080px] w-[1920px] flex-col overflow-hidden bg-white font-['Open_Sans','Noto_Sans',sans-serif] text-[12px] leading-[16px] tracking-[-0.3px] text-black">
      <TitleBar />
      <MenuBar />
      <StandardBar />
      <PropertyBar />
      <div className="flex h-[884px] shrink-0">
        <Toolbox />
        <div className="flex w-[1867px] shrink-0 flex-col">
          <div className="flex h-[20px] shrink-0 border-b border-[#0ba9e8] bg-[#e9e9e9]">
            <div className="flex w-[19px] items-center justify-center bg-[#d9d9d9]">
              <Svg w={15} h={14}>
                <path d="M7.500 0L15 7.500h-2V14H9V9H6v5H2V7.500H0z" fill="#333" />
              </Svg>
            </div>
            <div className="flex w-[101px] items-center bg-[#cfe2ff] pl-1 tracking-[-0.25px]">wheelprint.cdr</div>
            <div className="flex w-[19px] items-center justify-center bg-[#d9d9d9]">
              <Svg w={11} h={11}>
                <path d="M5.500 0v11M0 5.500h11" stroke="#aaa" strokeWidth="2" />
              </Svg>
            </div>
          </div>
          <TopRuler />
          <div className="flex h-[825px] shrink-0">
            <LeftRuler />
            <div className="flex flex-1 flex-col">
              <div className="flex h-[808px]">
                <Canvas />
                <div className="flex w-4 flex-col items-center bg-white">
                  <ChevBox d={UP} className="h-[17px] w-4" />
                  <div className="mt-[115px] mr-auto h-[253px] w-[15px] bg-[#cdcdcd]" />
                  <ChevBox d={DOWN} className="mt-auto h-[17px] w-4" />
                </div>
              </div>
              <PageBar />
            </div>
          </div>
          <div className="h-px shrink-0 bg-[#d4d4d4]" />
          <DocPalette />
        </div>
        <Palette />
      </div>
      <StatusBar />
      <Taskbar />
      <PrintDialog />
    </div>
  );
}
